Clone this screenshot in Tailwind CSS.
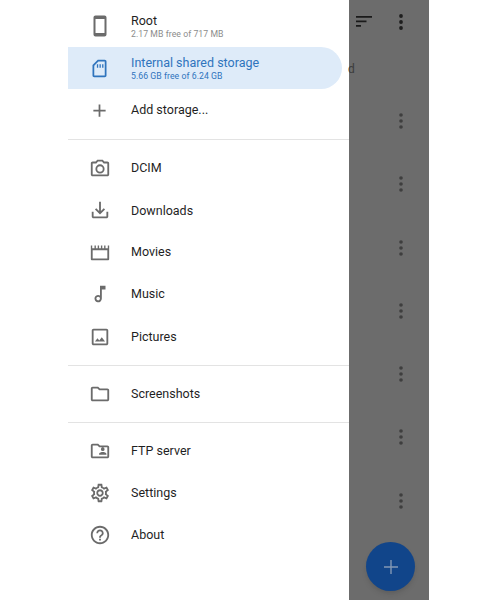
<!DOCTYPE html>
<html>
<head>
<meta charset="utf-8">
<script src="https://cdn.jsdelivr.net/npm/@tailwindcss/browser@4"></script>
</head>
<body class="bg-white font-['Roboto',sans-serif]">
<div class="w-[500px] h-[600px] pl-[68px] overflow-hidden">
  <div class="relative flex w-[361px] h-[600px] bg-[#6c6c6c] overflow-hidden">
    <div class="w-[281px] h-full bg-white pt-[5px] shrink-0 flex flex-col text-[12.5px] font-normal text-[#1f1f1f]">
      <div class="flex items-center h-[42px]">
        <svg class="w-[24px] h-[24px] ml-[20px] mr-[19px] text-[#6b6b6b]" viewBox="0 0 24 24" fill="currentColor"><path d="M16.500 1.500h-9C6.400 1.500 5.500 2.400 5.500 3.500v17c0 1.100.9 2 2 2h9c1.100 0 2-.9 2-2v-17c0-1.100-.9-2-2-2zm0 17.500h-9V5h9v14z"/></svg>
        <div class="flex flex-col gap-[1px]">
          <span class="leading-[15px]">Root</span>
          <span class="text-[8.7px] tracking-[0.05px] leading-[11px] text-[#8c8c8c]">2.17 MB free of 717 MB</span>
        </div>
      </div>
      <div class="flex items-center h-[42px] w-[274px] rounded-r-full bg-[#deebf9] text-[#2f74bd]">
        <svg class="w-[21px] h-[21px] ml-[21px] mr-[21px]" viewBox="0 0 24 24" fill="currentColor"><path d="M18 2h-8L4 8v12c0 1.100.9 2 2 2h12c1.100 0 2-.9 2-2V4c0-1.100-.9-2-2-2zm0 18H6V8.800L10.800 4H18v16zM9 7h1.500v4H9zm3 0h1.500v4H12zm3 0h1.500v4H15z"/></svg>
        <div class="flex flex-col gap-[1px]">
          <span class="leading-[15px]">Internal shared storage</span>
          <span class="text-[8.7px] tracking-[0.05px] leading-[11px]">5.66 GB free of 6.24 GB</span>
        </div>
      </div>
      <div class="flex items-center h-[42px]">
        <svg class="w-[21px] h-[21px] ml-[21px] mr-[21px] text-[#6b6b6b]" viewBox="0 0 24 24" fill="currentColor"><path d="M19 13h-6v6h-2v-6H5v-2h6V5h2v6h6v2z"/></svg>
        <span class="pt-[1px]">Add storage...</span>
      </div>
      <div class="h-px bg-[#e3e3e3] mt-[8px] mb-[7px]"></div>
      <div class="flex items-center h-[42px]">
        <svg class="w-[22px] h-[22px] ml-[21px] mr-[20px] text-[#6b6b6b]" viewBox="0 0 24 24" fill="currentColor"><path d="M20 5h-3.200L15 3H9L7.200 5H4c-1.100 0-2 .9-2 2v12c0 1.100.9 2 2 2h16c1.100 0 2-.9 2-2V7c0-1.100-.9-2-2-2zm0 14H4V7h4.050l1.830-2h4.240l1.830 2H20v12zM12 8a5 5 0 1 0 0 10 5 5 0 0 0 0-10zm0 8a3 3 0 1 1 0-6 3 3 0 0 1 0 6z"/></svg>
        <span class="pt-[1px]">DCIM</span>
      </div>
      <div class="flex items-center h-[42px]">
        <svg class="w-[22px] h-[22px] ml-[21px] mr-[20px] text-[#6b6b6b]" viewBox="0 0 24 24" fill="currentColor"><path d="M11 3h2v10.200l3.100-3.100 1.400 1.400L12 17l-5.500-5.500 1.400-1.400L11 13.200V3zM3 14h2v5h14v-5h2v5c0 1.100-.9 2-2 2H5c-1.100 0-2-.9-2-2v-5z"/></svg>
        <span class="pt-[2px]">Downloads</span>
      </div>
      <div class="flex items-center h-[42px]">
        <svg class="w-[22px] h-[22px] ml-[21px] mr-[20px] text-[#6b6b6b]" viewBox="0 0 24 24" fill="currentColor"><path d="M2 5h1.500v3H6V5h1.500v3h2V5H11v3h2V5h1.500v3h2V5H18v3h2.500V5H22v15c0 .6-.4 1-1 1H3c-.6 0-1-.4-1-1V5zm2 5v9h16v-9H4z"/></svg>
        <span class="pt-[1px]">Movies</span>
      </div>
      <div class="flex items-center h-[42px]">
        <svg class="w-[22px] h-[22px] ml-[21px] mr-[20px] text-[#6b6b6b]" viewBox="0 0 24 24" fill="currentColor"><path d="M12 3v10.550A4 4 0 1 0 14 17V7h4V3h-6zm-2 16a2 2 0 1 1 0-4 2 2 0 0 1 0 4z"/></svg>
        <span class="pt-[1px]">Music</span>
      </div>
      <div class="flex items-center h-[43px]">
        <svg class="w-[22px] h-[22px] ml-[21px] mr-[20px] text-[#6b6b6b]" viewBox="0 0 24 24" fill="currentColor"><path d="M19 3H5c-1.100 0-2 .9-2 2v14c0 1.100.9 2 2 2h14c1.100 0 2-.9 2-2V5c0-1.100-.9-2-2-2zm0 16H5V5h14v14zm-5.040-6.710-2.750 3.540-1.960-2.360L6.500 17h11l-3.540-4.710z"/></svg>
        <span class="pt-[2px]">Pictures</span>
      </div>
      <div class="h-px bg-[#e3e3e3] mt-[7px] mb-[7px]"></div>
      <div class="flex items-center h-[42px]">
        <svg class="w-[22px] h-[22px] ml-[21px] mr-[20px] text-[#6b6b6b]" viewBox="0 0 24 24" fill="currentColor"><path d="M9.170 6l2 2H20v10H4V6h5.170M10 4H4c-1.100 0-2 .9-2 2v12c0 1.100.9 2 2 2h16c1.100 0 2-.9 2-2V8c0-1.100-.9-2-2-2h-8l-2-2z"/></svg>
        <span class="pt-[1px]">Screenshots</span>
      </div>
      <div class="h-px bg-[#e3e3e3] mt-[7px] mb-[7px]"></div>
      <div class="flex items-center h-[42px]">
        <svg class="w-[22px] h-[22px] ml-[21px] mr-[20px] text-[#6b6b6b]" viewBox="0 0 24 24" fill="currentColor"><path d="M20 6h-8l-2-2H4c-1.100 0-2 .9-2 2v12c0 1.100.9 2 2 2h16c1.100 0 2-.9 2-2V8c0-1.100-.9-2-2-2zm0 12H4V6h5.170l2 2H20v10zm-5-6a2 2 0 1 0 0-4 2 2 0 0 0 0 4zm-4 4h8v-1c0-1.330-2.670-2-4-2s-4 .67-4 2v1z"/></svg>
        <span class="pt-[1px]">FTP server</span>
      </div>
      <div class="flex items-center h-[42px]">
        <svg class="w-[22px] h-[22px] ml-[21px] mr-[20px] text-[#6b6b6b]" viewBox="0 0 24 24" fill="currentColor"><path d="M19.430 12.980c.04-.32.070-.64.070-.98 0-.34-.03-.66-.07-.98l2.110-1.650c.19-.15.240-.42.120-.64l-2-3.460c-.09-.16-.26-.25-.44-.25-.06 0-.12.01-.17.030l-2.490 1c-.52-.4-1.080-.73-1.690-.98l-.38-2.650C14.460 2.180 14.250 2 14 2h-4c-.25 0-.46.18-.49.420l-.38 2.650c-.61.25-1.170.59-1.690.98l-2.490-1c-.06-.02-.12-.03-.18-.03-.17 0-.34.09-.43.25l-2 3.460c-.13.220-.07.490.12.640l2.110 1.650c-.04.320-.07.650-.07.980 0 .33.030.66.070.98l-2.110 1.650c-.19.150-.24.420-.12.640l2 3.460c.09.160.26.250.44.250.06 0 .12-.01.170-.03l2.490-1c.52.400 1.080.730 1.690.980l.38 2.650c.03.240.24.420.49.420h4c.25 0 .46-.18.49-.42l.38-2.650c.61-.25 1.170-.59 1.690-.98l2.490 1c.06.020.12.030.18.030.17 0 .34-.09.43-.25l2-3.460c.12-.22.070-.49-.12-.64l-2.110-1.650zm-1.980-1.710c.04.310.05.520.05.730 0 .21-.02.430-.05.730l-.14 1.130.89.700 1.080.840-.7 1.210-1.270-.51-1.040-.42-.9.680c-.43.320-.84.560-1.250.730l-1.060.43-.16 1.130-.2 1.350h-1.400l-.19-1.350-.16-1.130-1.060-.43c-.43-.18-.83-.41-1.230-.71l-.91-.7-1.060.430-1.270.510-.7-1.210 1.080-.84.890-.7-.14-1.130c-.03-.31-.05-.540-.05-.740s.02-.43.05-.73l.14-1.130-.89-.7-1.080-.84.7-1.210 1.270.51 1.040.42.9-.68c.43-.32.840-.56 1.250-.73l1.060-.43.160-1.130.2-1.350h1.390l.19 1.350.16 1.130 1.060.43c.43.180.83.410 1.230.710l.91.700 1.060-.43 1.270-.51.7 1.210-1.070.85-.89.700.14 1.130zM12 8c-2.210 0-4 1.790-4 4s1.790 4 4 4 4-1.790 4-4-1.790-4-4-4zm0 6c-1.100 0-2-.9-2-2s.9-2 2-2 2 .9 2 2-.9 2-2 2z"/></svg>
        <span class="pt-[1px]">Settings</span>
      </div>
      <div class="flex items-center h-[42px]">
        <svg class="w-[22px] h-[22px] ml-[21px] mr-[20px] text-[#6b6b6b]" viewBox="0 0 24 24" fill="currentColor"><path d="M11 18h2v-2h-2v2zm1-16C6.480 2 2 6.480 2 12s4.480 10 10 10 10-4.480 10-10S17.520 2 12 2zm0 18c-4.410 0-8-3.590-8-8s3.590-8 8-8 8 3.590 8 8-3.590 8-8 8zm0-14c-2.210 0-4 1.790-4 4h2c0-1.100.9-2 2-2s2 .9 2 2c0 2-3 1.750-3 5h2c0-2.250 3-2.500 3-5 0-2.210-1.790-4-4-4z"/></svg>
        <span class="pt-[1px]">About</span>
      </div>
    </div>
    <div class="relative flex-1">
      <div class="flex items-center h-[44px] pl-[7px] gap-[27px]">
        <svg class="w-[16px] h-[11px] mt-[-1px]" viewBox="0 0 16 11" fill="#1a1a1a"><path d="M0 0h16v1.700H0zM0 4.500h10.500v1.700H0zM0 9h5v1.700H0z"/></svg>
        <svg class="w-[4px] h-[16px]" viewBox="0 0 4 16" fill="#1e1e1e"><circle cx="2" cy="2" r="1.900"/><circle cx="2" cy="8" r="1.900"/><circle cx="2" cy="14" r="1.900"/></svg>
      </div>
      <span class="absolute left-[-1px] top-[60px] text-[12px] text-[#3c3c3c]">d</span>
      <div class="flex flex-col items-start pl-[50px] pt-[69px] gap-[47.300px]">
        <svg class="w-[4px] h-[16px]" viewBox="0 0 4 16" fill="#3e3e3e"><circle cx="2" cy="2" r="1.800"/><circle cx="2" cy="8" r="1.800"/><circle cx="2" cy="14" r="1.800"/></svg>
        <svg class="w-[4px] h-[16px]" viewBox="0 0 4 16" fill="#3e3e3e"><circle cx="2" cy="2" r="1.800"/><circle cx="2" cy="8" r="1.800"/><circle cx="2" cy="14" r="1.800"/></svg>
        <svg class="w-[4px] h-[16px]" viewBox="0 0 4 16" fill="#3e3e3e"><circle cx="2" cy="2" r="1.800"/><circle cx="2" cy="8" r="1.800"/><circle cx="2" cy="14" r="1.800"/></svg>
        <svg class="w-[4px] h-[16px]" viewBox="0 0 4 16" fill="#3e3e3e"><circle cx="2" cy="2" r="1.800"/><circle cx="2" cy="8" r="1.800"/><circle cx="2" cy="14" r="1.800"/></svg>
        <svg class="w-[4px] h-[16px]" viewBox="0 0 4 16" fill="#3e3e3e"><circle cx="2" cy="2" r="1.800"/><circle cx="2" cy="8" r="1.800"/><circle cx="2" cy="14" r="1.800"/></svg>
        <svg class="w-[4px] h-[16px]" viewBox="0 0 4 16" fill="#3e3e3e"><circle cx="2" cy="2" r="1.800"/><circle cx="2" cy="8" r="1.800"/><circle cx="2" cy="14" r="1.800"/></svg>
        <svg class="w-[4px] h-[16px]" viewBox="0 0 4 16" fill="#3e3e3e"><circle cx="2" cy="2" r="1.800"/><circle cx="2" cy="8" r="1.800"/><circle cx="2" cy="14" r="1.800"/></svg>
      </div>
      <div class="absolute left-[17px] top-[542px] w-[49px] h-[49px] rounded-full bg-[#11458a] shadow-md flex items-center justify-center">
        <svg class="w-[14px] h-[14px]" viewBox="0 0 14 14" fill="#8298b5"><path d="M6.300 0h1.400v6.300H14v1.400H7.700V14H6.300V7.700H0V6.300h6.300z"/></svg>
      </div>
    </div>
  </div>
</div>
</body>
</html>
